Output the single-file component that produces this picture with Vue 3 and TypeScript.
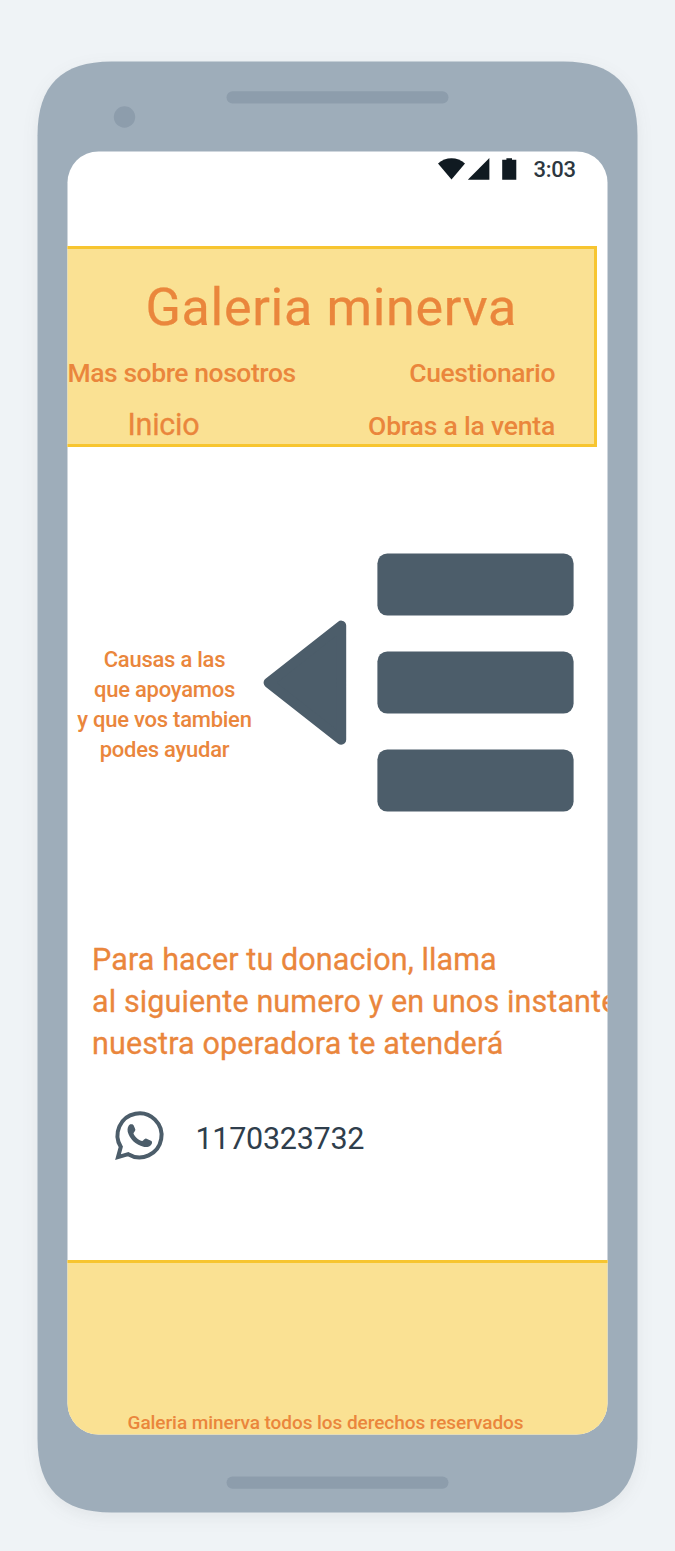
<script setup lang="ts">
const blocks: number[] = [1, 2, 3]
const causes: string[] = ['Causas a las', 'que apoyamos', 'y que vos tambien', 'podes ayudar']
const donation: string[] = [
  'Para hacer tu donacion, llama',
  'al siguiente numero y en unos instantes',
  'nuestra operadora te atenderá',
]
</script>

<template>
  <main class="stage">
    <div class="device">
      <svg class="shell" viewBox="0 0 601 1452" aria-hidden="true">
        <path
          class="body"
          transform="translate(.5 .5)"
          d="M0 74C0 24 24 0 74 0H526C576 0 600 24 600 74V1377C600 1427 576 1451 526 1451H74C24 1451 0 1427 0 1377Z"
        />
        <circle cx="87.5" cy="56" r="10.7" />
        <rect x="189.5" y="30.3" width="222" height="12.3" rx="6.1" />
        <rect x="189.5" y="1415.4" width="222" height="12.3" rx="6.1" />
      </svg>

      <div class="screen">
        <div class="status">
          <svg class="status-icons" viewBox="0 0 80 22" aria-hidden="true">
            <path d="M0 5.6C7.6-1.7 19.4-1.7 27 5.6L13.5 21.4Z" />
            <path d="M29.8 21.8L51.4 0V21.8Z" />
            <path d="M64.2 1.7H68.4V.3H74V1.7H78.3V21.8H64.2Z" />
          </svg>
          <span class="time">3:03</span>
        </div>

        <header class="header">
          <h1>Galeria minerva</h1>
          <nav>
            <div class="row">
              <a class="about">Mas sobre nosotros</a>
              <a class="quiz">Cuestionario</a>
            </div>
            <div class="row second">
              <a class="home">Inicio</a>
              <a class="sale">Obras a la venta</a>
            </div>
          </nav>
        </header>

        <section class="causes">
          <p class="causes-text">
            <span v-for="line in causes" :key="line">{{ line }}</span>
          </p>
          <svg class="arrow" viewBox="0 0 84 126" aria-hidden="true">
            <path d="M5.6 62.7L78.2 5.6V119.8Z" />
          </svg>
          <div class="blocks">
            <div v-for="b in blocks" :key="b" class="block"></div>
          </div>
        </section>

        <p class="donation">
          <span v-for="line in donation" :key="line">{{ line }}</span>
        </p>

        <div class="contact">
          <svg class="whatsapp" viewBox="0 0 48 49" aria-hidden="true">
            <path class="bubble" d="M2.5 45.8L5.3 35.6A22 22 0 1 1 12.7 42.9Z" />
            <path
              class="handset"
              d="M14.6 13C16.4 12.7 17.5 12.7 18.2 14.2L19.8 18C20.3 19.5 18.2 21 18 22C17.9 23.5 22.5 29 26.5 29.8C27.8 29.8 29 26.8 30.5 27.2L35.5 29.4C36.8 30 36.8 31.5 36.2 32.6C34.5 35.4 31 36.3 28 35.5C20 33.5 14 27.5 12.2 20.5C11.6 17 12.6 14.2 14.6 13Z"
            />
          </svg>
          <span class="phone">1170323732</span>
        </div>

        <footer class="footer">Galeria minerva todos los derechos reservados</footer>
      </div>
    </div>
  </main>
</template>

<style>
body {
  margin: 0;
  background: #eff3f6;
}
</style>

<style scoped>
.stage {
  box-sizing: border-box;
  height: 1551px;
  padding: 61px 37px 0;
  overflow: hidden;
  background: #eff3f6;
  color: #ea863c;
  font-family: Roboto, "Liberation Sans", sans-serif;
}
.device {
  position: relative;
  box-sizing: border-box;
  width: 601px;
  height: 1452px;
  padding: 90px 30px 0;
}
.shell {
  position: absolute;
  inset: 0;
  width: 601px;
  height: 1452px;
  overflow: visible;
  fill: #8d9dac;
}
.body {
  fill: #9eadba;
  filter: drop-shadow(0 5px 8px rgba(60, 60, 60, 0.07));
}
.screen {
  position: relative;
  display: flex;
  flex-direction: column;
  width: 541px;
  height: 1284px;
  overflow: hidden;
  background: #fff;
  clip-path: inset(0.5px round 31px);
}
.status {
  display: flex;
  box-sizing: border-box;
  height: 95px;
  padding: 7px 31px 0 371px;
}
.status-icons {
  width: 80px;
  height: 22px;
  fill: #101a21;
}
.time {
  margin: -1.5px 0 0 15.5px;
  color: #2d3740;
  font-size: 22px;
  font-weight: 500;
  line-height: 26px;
  letter-spacing: -0.3px;
}
.header {
  box-sizing: border-box;
  width: 530px;
  height: 201px;
  padding-top: 29px;
  border: 3px solid #f7c530;
  border-left: 0;
  background: #fae193;
}
h1 {
  margin: 0 0 0 78.5px;
  font-size: 52px;
  font-weight: 400;
  line-height: 60px;
  letter-spacing: 0.7px;
  white-space: nowrap;
  -webkit-text-stroke: 0.25px currentColor;
}
nav {
  margin-top: 20px;
}
.row {
  display: flex;
  align-items: baseline;
  justify-content: space-between;
  padding-right: 39px;
  font-size: 26.5px;
  font-weight: 500;
  line-height: 30px;
  white-space: nowrap;
}
.row.second {
  margin-top: 18.5px;
  line-height: 36px;
}
.about {
  margin-left: 0.5px;
  letter-spacing: -0.44px;
}
.quiz {
  letter-spacing: -0.42px;
}
.sale {
  letter-spacing: -0.2px;
}
.home {
  margin-left: 60.5px;
  font-size: 30.5px;
  font-weight: 400;
  letter-spacing: -0.25px;
  -webkit-text-stroke: 0.3px currentColor;
}
.causes {
  display: flex;
  box-sizing: border-box;
  height: 258px;
  margin-top: 106px;
}
.causes-text {
  width: 175px;
  margin: 92px 0 0 10px;
  font-size: 22px;
  font-weight: 500;
  line-height: 30px;
  letter-spacing: -0.25px;
  text-align: center;
  white-space: nowrap;
}
.causes-text span,
.donation span {
  display: block;
}
.arrow {
  width: 84px;
  height: 126px;
  margin: 66.5px 0 0 11px;
  fill: #4c5d6a;
  stroke: #4c5d6a;
  stroke-width: 10;
  stroke-linejoin: round;
}
.blocks {
  display: flex;
  flex-direction: column;
  gap: 35px;
  margin: 0 0 0 30px;
}
.block {
  flex: none;
  width: 197px;
  height: 63px;
  background: #4c5d6a;
  clip-path: inset(0.4px round 10px);
}
.donation {
  margin: 128px 0 0 25px;
  font-size: 30.5px;
  font-weight: 400;
  line-height: 42px;
  letter-spacing: 0.12px;
  white-space: nowrap;
  -webkit-text-stroke: 0.3px currentColor;
}
.contact {
  display: flex;
  height: 49px;
  margin: 46px 0 0 48px;
}
.whatsapp {
  width: 48px;
  height: 49px;
  overflow: visible;
}
.bubble,
.handset {
  transform: translate(0.5px, 0.3px);
}
.bubble {
  fill: none;
  stroke: #4c5d6a;
  stroke-width: 4;
}
.handset {
  fill: #4c5d6a;
}
.phone {
  margin: 10px 0 0 32.5px;
  color: #2f3e4c;
  font-size: 30.5px;
  line-height: 36px;
  letter-spacing: -0.27px;
}
.footer {
  flex: none;
  box-sizing: border-box;
  height: 175px;
  margin-top: auto;
  padding: 147.5px 0 0 60.5px;
  border-top: 3px solid #f7c530;
  background: #fae193;
  font-size: 19px;
  font-weight: 500;
  line-height: 24px;
  letter-spacing: -0.06px;
  white-space: nowrap;
}
</style>
